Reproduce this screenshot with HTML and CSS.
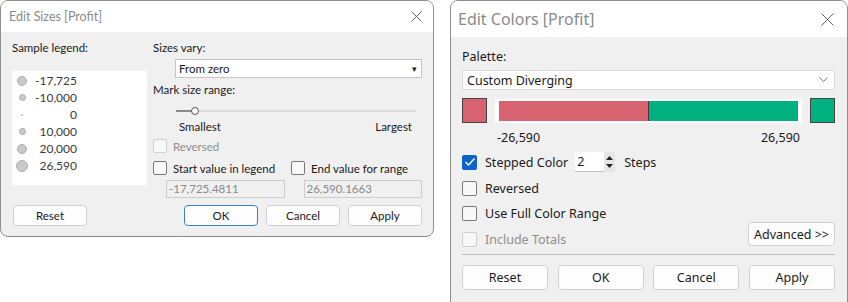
FILE: index.html
```html
<!DOCTYPE html>
<html lang="en">
<head>
  <meta charset="UTF-8" />
  <title>Edit Sizes / Edit Colors</title>
  <link rel="stylesheet" href="styles.css">
</head>
<body>

  <!-- Edit Sizes dialog -->
  <div class="dialog sizes">
    <div class="titlebar">
      <span>Edit Sizes [Profit]</span>
      <svg class="close" width="11" height="11" viewBox="0 0 11 11"><path d="M0.5 0.5 L10.5 10.5 M10.5 0.5 L0.5 10.5" stroke="#666" stroke-width="1"/></svg>
    </div>
    <div class="sizes-body">
      <div class="sizes-main">
        <div class="legend-col">
          <p class="label">Sample legend:</p>
          <div class="legend-box">
            <div class="legend-row"><span class="dot"><i style="width:10px;height:10px"></i></span><span class="num">-17,725</span></div>
            <div class="legend-row"><span class="dot"><i style="width:7px;height:7px"></i></span><span class="num">-10,000</span></div>
            <div class="legend-row"><span class="dot"><i style="width:2px;height:2px"></i></span><span class="num">0</span></div>
            <div class="legend-row"><span class="dot"><i style="width:7px;height:7px"></i></span><span class="num">10,000</span></div>
            <div class="legend-row"><span class="dot"><i style="width:10px;height:10px"></i></span><span class="num">20,000</span></div>
            <div class="legend-row"><span class="dot"><i style="width:12px;height:12px"></i></span><span class="num">26,590</span></div>
          </div>
        </div>
        <div class="options-col">
          <p class="label">Sizes vary:</p>
          <div class="dropdown">
            <span>From zero</span>
            <span class="arrow">&#9662;</span>
          </div>
          <p class="label range-label">Mark size range:</p>
          <div class="slider">
            <div class="track"></div>
            <div class="track-fill"></div>
            <div class="thumb"></div>
          </div>
          <div class="slider-labels">
            <span>Smallest</span>
            <span>Largest</span>
          </div>
          <label class="check disabled"><span class="box"></span>Reversed</label>
          <div class="range-row">
            <label class="check start-check"><span class="box"></span>Start value in legend</label>
            <label class="check"><span class="box"></span>End value for range</label>
          </div>
          <div class="range-inputs">
            <div class="field">-17,725.4811</div>
            <div class="field">26,590.1663</div>
          </div>
        </div>
      </div>
      <div class="sizes-buttons">
        <button class="btn small">Reset</button>
        <div class="btn-group">
          <button class="btn small default">OK</button>
          <button class="btn small">Cancel</button>
          <button class="btn small">Apply</button>
        </div>
      </div>
    </div>
  </div>

  <!-- Edit Colors dialog -->
  <div class="dialog colors">
    <div class="titlebar big">
      <span>Edit Colors [Profit]</span>
      <svg class="close" width="13" height="13" viewBox="0 0 13 13"><path d="M0.5 0.5 L12.5 12.5 M12.5 0.5 L0.5 12.5" stroke="#666" stroke-width="1"/></svg>
    </div>
    <div class="colors-body">
      <p class="label">Palette:</p>
      <div class="dropdown wide">
        <span>Custom Diverging</span>
        <svg class="chevron" width="9" height="6" viewBox="0 0 9 6"><path d="M0.5 0.5 L4.5 4.5 L8.5 0.5" fill="none" stroke="#777" stroke-width="1"/></svg>
      </div>
      <div class="ramp-row">
        <div class="swatch red"></div>
        <div class="ramp">
          <div class="ramp-red"></div>
          <div class="ramp-green"></div>
        </div>
        <div class="swatch green"></div>
      </div>
      <div class="ramp-labels">
        <span>-26,590</span>
        <span>26,590</span>
      </div>
      <div class="stepped-row">
        <label class="check big checked">
          <span class="box"><svg width="12" height="10" viewBox="0 0 12 10"><path d="M1.5 5 L4.5 8 L10.5 1.5" fill="none" stroke="#fff" stroke-width="1.4"/></svg></span>Stepped Color
        </label>
        <div class="spin">
          <span>2</span>
          <span class="spin-arrows">
            <svg width="9" height="16" viewBox="0 0 9 16"><path d="M1 6 L4.5 2 L8 6 Z M1 10 L4.5 14 L8 10 Z" fill="#222"/></svg>
          </span>
        </div>
        <span>Steps</span>
      </div>
      <label class="check big"><span class="box"></span>Reversed</label>
      <div class="bottom-opts">
        <div>
          <label class="check big"><span class="box"></span>Use Full Color Range</label>
          <label class="check big disabled"><span class="box"></span>Include Totals</label>
        </div>
        <button class="btn advanced">Advanced &gt;&gt;</button>
      </div>
      <div class="separator"></div>
      <div class="colors-buttons">
        <button class="btn large">Reset</button>
        <button class="btn large">OK</button>
        <button class="btn large">Cancel</button>
        <button class="btn large">Apply</button>
      </div>
    </div>
  </div>

</body>
</html>
```

FILE: styles.css
```css
body {
  margin: 0;
  padding: 0;
  background-color: #ffffff;
  font-family: 'Noto Sans', 'Open Sans', sans-serif;
  font-size: 12px;
  color: #1a1a1a;
  display: flex;
  align-items: flex-start;
  gap: 16px;
  height: 302px;
  overflow: hidden;
}

p {
  margin: 0;
}

.dialog {
  background-color: #f0f0f0;
  border: 1px solid #8e8e8e;
  border-radius: 8px;
  overflow: hidden;
  flex-shrink: 0;
  box-sizing: border-box;
}

.titlebar {
  background-color: #ffffff;
  height: 31px;
  display: flex;
  align-items: center;
  justify-content: space-between;
  padding: 0 11px 0 8px;
  font-size: 12.5px;
  color: #8a8a8a;
}

.titlebar.big {
  height: 36px;
  font-size: 16px;
  padding: 0 13px 0 7px;
}

.label {
  line-height: 16px;
  white-space: nowrap;
}

/* ---------- sizes ---------- */

.sizes {
  width: 434px;
  height: 237px;
  font-family: 'Lato', 'Noto Sans', sans-serif;
  font-size: 11.5px;
}

.sizes-body {
  padding: 8px 11px 0 11px;
}

.sizes-main {
  display: flex;
  gap: 6px;
}

.legend-col {
  width: 135px;
  flex-shrink: 0;
}

.legend-box {
  margin-top: 15px;
  background-color: #ffffff;
  height: 113px;
  padding-top: 1px;
}

.legend-row {
  display: flex;
  align-items: center;
  height: 17px;
  color: #3a3a3a;
  font-size: 12px;
}

.dot {
  width: 12px;
  height: 12px;
  margin-left: 4px;
  display: flex;
  align-items: center;
  justify-content: center;
}

.dot i {
  display: block;
  border-radius: 50%;
  background-color: #c9c9c9;
  border: 1px solid #adadad;
  box-sizing: border-box;
}

.num {
  width: 49px;
  text-align: right;
}

.options-col {
  flex-grow: 1;
  min-width: 0;
  white-space: nowrap;
}

.dropdown {
  margin: 3px 0 0 22px;
  height: 17px;
  background-color: #ffffff;
  border: 1px solid #c4c4c4;
  display: flex;
  align-items: center;
  justify-content: space-between;
  padding: 0 4px 0 3px;
}

.arrow {
  font-size: 9px;
  color: #222;
}

.range-label {
  margin-top: 4px;
}

.slider {
  position: relative;
  height: 12px;
  margin: 7px 6px 0 23px;
}

.track {
  position: absolute;
  left: 0;
  right: 0;
  top: 5px;
  height: 2px;
  background-color: #dcdcdc;
}

.track-fill {
  position: absolute;
  left: 0;
  width: 16px;
  top: 5px;
  height: 2px;
  background-color: #8a8a8a;
}

.thumb {
  position: absolute;
  left: 15px;
  top: 2px;
  width: 6px;
  height: 6px;
  border: 1px solid #555;
  border-radius: 50%;
  background-color: #fff;
}

.slider-labels {
  display: flex;
  justify-content: space-between;
  margin: 2px 10px 0 26px;
  line-height: 16px;
}

.check {
  display: flex;
  align-items: center;
  gap: 6px;
  height: 16px;
  white-space: nowrap;
}

.check .box {
  width: 12px;
  height: 12px;
  border: 1px solid #7a7a7a;
  border-radius: 2px;
  background-color: #f8f8f8;
  display: flex;
  align-items: center;
  justify-content: center;
  flex-shrink: 0;
}

.check.disabled {
  color: #8e8e8e;
}

.check.disabled .box {
  border-color: #cfcfcf;
}

.sizes .check.disabled {
  margin-top: 3px;
}

.range-row {
  display: flex;
  margin-top: 6px;
}

.start-check {
  width: 138px;
  flex-shrink: 0;
}

.range-inputs {
  display: flex;
  gap: 19px;
  margin: 4px 0 0 13px;
}

.field {
  width: 115px;
  height: 16px;
  border: 1px solid #cccccc;
  background-color: #f0f0f0;
  color: #8a8a8a;
  padding-left: 2px;
  line-height: 16px;
}

.sizes-buttons {
  display: flex;
  justify-content: space-between;
  margin-top: 7px;
  padding: 0 0 0 1px;
}

.btn-group {
  display: flex;
  gap: 8px;
}

.btn {
  font-family: inherit;
  font-size: inherit;
  color: #1a1a1a;
  background-color: #fdfdfd;
  border: 1px solid #d0d0d0;
  border-radius: 4px;
  padding: 0;
}

.btn.small {
  width: 74px;
  height: 21px;
}

.btn.default {
  border-color: #3b7fc7;
}

/* ---------- colors ---------- */

.colors {
  width: 398px;
  height: 320px;
  font-size: 12.5px;
}

.colors-body {
  padding: 11px 0 0 11px;
  width: 373px;
}

.colors .label {
  line-height: 18px;
}

.dropdown.wide {
  margin: 4px 0 0 0;
  height: 18px;
  padding: 0 6px 0 4px;
  border-color: #dcdcdc;
}

.ramp-row {
  display: flex;
  align-items: center;
  margin-top: 8px;
  gap: 8px;
}

.swatch {
  width: 23px;
  height: 23px;
  border: 1px solid #444;
}

.swatch.red {
  background-color: #d6636f;
}

.swatch.green {
  background-color: #00b07f;
}

.ramp {
  flex-grow: 1;
  height: 20px;
  background-color: #ffffff;
  padding: 2px 4px;
  display: flex;
}

.ramp-red {
  flex: 1;
  background-color: #d6636f;
  border-right: 1px solid #5a3035;
}

.ramp-green {
  flex: 1;
  background-color: #00b07f;
}

.ramp-labels {
  display: flex;
  justify-content: space-between;
  margin: 5px 35px 0 35px;
  line-height: 20px;
}

.stepped-row {
  display: flex;
  align-items: center;
  margin-top: 3px;
  height: 22px;
}

.check.big {
  height: 18px;
  gap: 8px;
}

.check.big .box {
  width: 13px;
  height: 13px;
}

.check.checked .box {
  background-color: #0f62c9;
  border-color: #0f62c9;
}

.spin {
  margin-left: 7px;
  width: 40px;
  height: 20px;
  background-color: #ffffff;
  border-bottom: 1px solid #c0c0c0;
  display: flex;
  align-items: center;
  justify-content: space-between;
  padding-left: 2px;
  box-sizing: border-box;
  margin-right: 9px;
}

.spin-arrows {
  background-color: #e6e6e6;
  height: 20px;
  width: 11px;
  display: flex;
  align-items: center;
  justify-content: center;
}

.stepped-row + .check.big {
  margin-top: 6px;
}

.bottom-opts {
  display: flex;
  justify-content: space-between;
  align-items: flex-end;
  margin-top: 7px;
}

.bottom-opts .check.big + .check.big {
  margin-top: 8px;
}

.btn.advanced {
  width: 87px;
  height: 24px;
  margin-bottom: 2px;
}

.separator {
  height: 1px;
  background-color: #bdbdbd;
  margin-top: 6px;
}

.colors-buttons {
  display: flex;
  justify-content: space-between;
  margin-top: 10px;
}

.btn.large {
  width: 86px;
  height: 25px;
}
```
